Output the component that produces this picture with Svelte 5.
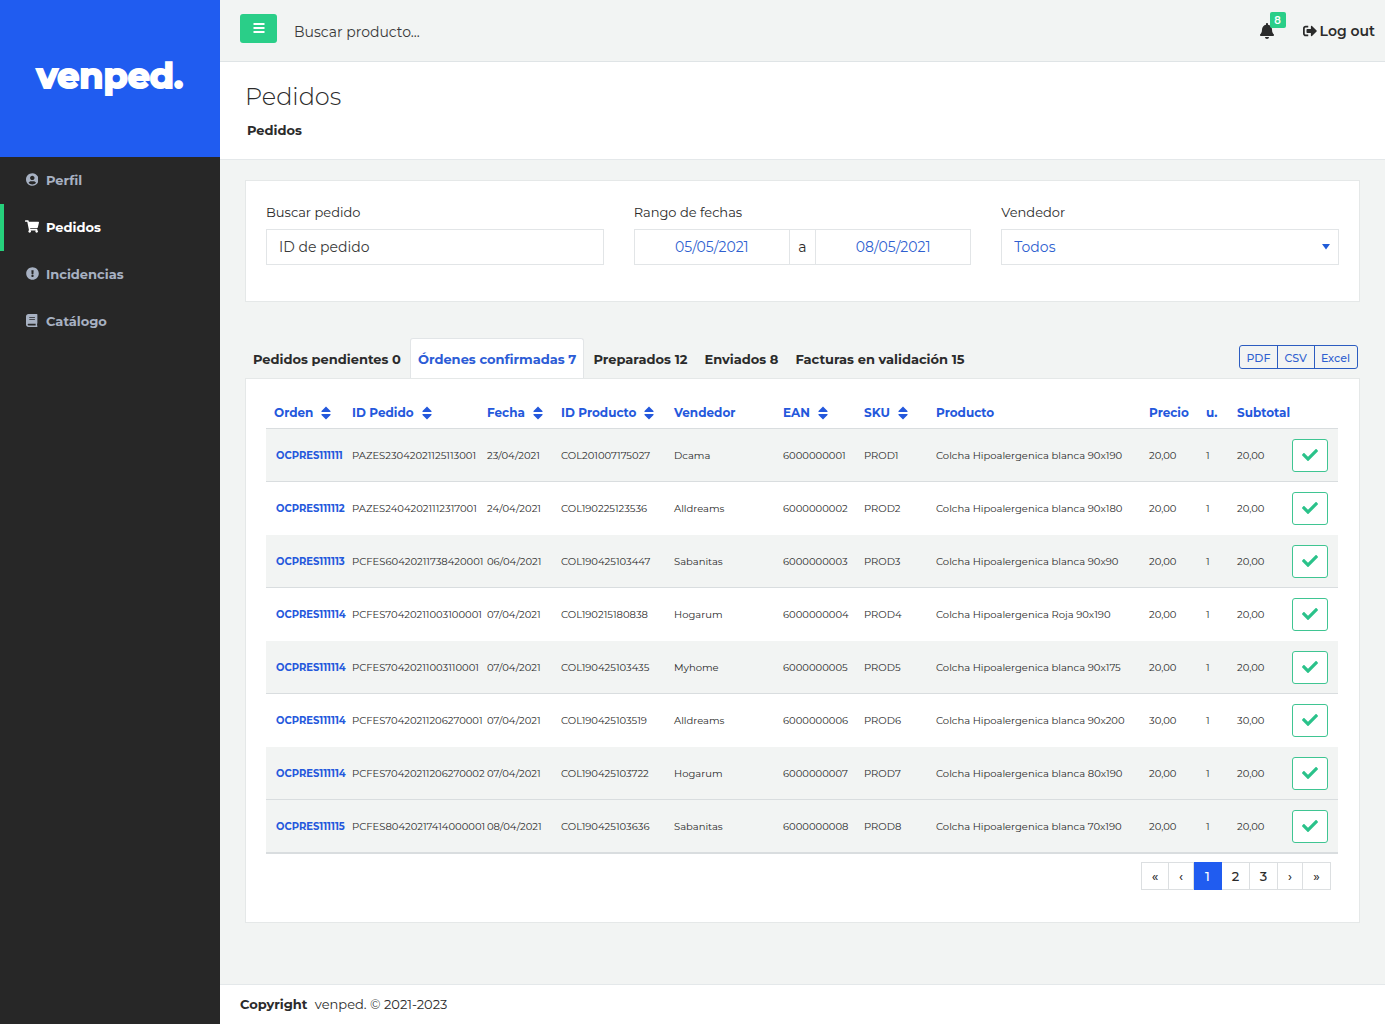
<script>
  const paths = {
    user: ['0 0 496 512', 'M248 8C111 8 0 119 0 256s111 248 248 248 248-111 248-248S385 8 248 8zm0 96c48.6 0 88 39.4 88 88s-39.4 88-88 88-88-39.4-88-88 39.4-88 88-88zm0 344c-58.7 0-111.3-26.6-146.5-68.2 18.8-35.4 55.6-59.8 98.5-59.8 2.4 0 4.8.4 7.1 1.1 13 4.2 26.6 6.9 40.9 6.9 14.3 0 28-2.7 40.9-6.9 2.3-.7 4.7-1.1 7.1-1.1 42.9 0 79.7 24.4 98.5 59.8C359.3 421.4 306.7 448 248 448z'],
    cart: ['0 0 576 512', 'M528.12 301.319l47.273-208C578.806 78.301 567.391 64 551.99 64H159.208l-9.166-44.81C147.758 8.021 137.93 0 126.529 0H24C10.745 0 0 10.745 0 24v16c0 13.255 10.745 24 24 24h69.883l70.248 343.435C147.325 417.1 136 435.222 136 456c0 30.928 25.072 56 56 56s56-25.072 56-56c0-15.674-6.447-29.835-16.824-40h209.647C430.447 426.165 424 440.326 424 456c0 30.928 25.072 56 56 56s56-25.072 56-56c0-22.172-12.888-41.332-31.579-50.405l5.517-24.276c3.413-15.018-8.002-29.319-23.403-29.319H218.117l-6.545-32h293.145c11.206 0 20.92-7.754 23.403-18.681z'],
    alert: ['0 0 512 512', 'M504 256c0 136.997-111.043 248-248 248S8 392.997 8 256C8 119.083 119.043 8 256 8s248 111.083 248 248zm-248 50c-25.405 0-46 20.595-46 46s20.595 46 46 46 46-20.595 46-46-20.595-46-46-46zm-43.673-165.346l7.418 136c.347 6.364 5.609 11.346 11.982 11.346h48.546c6.373 0 11.635-4.982 11.982-11.346l7.418-136c.375-6.874-5.098-12.654-11.982-12.654h-63.383c-6.884 0-12.356 5.78-11.981 12.654z'],
    book: ['0 0 448 512', 'M448 360V24c0-13.3-10.7-24-24-24H96C43 0 0 43 0 96v320c0 53 43 96 96 96h328c13.3 0 24-10.7 24-24v-16c0-7.5-3.5-14.3-8.9-18.7-4.2-15.4-4.2-59.3 0-74.7 5.4-4.3 8.9-11.1 8.9-18.6zM128 134c0-3.3 2.7-6 6-6h212c3.3 0 6 2.7 6 6v20c0 3.3-2.7 6-6 6H134c-3.3 0-6-2.7-6-6v-20zm0 64c0-3.3 2.7-6 6-6h212c3.3 0 6 2.7 6 6v20c0 3.3-2.7 6-6 6H134c-3.3 0-6-2.7-6-6v-20zm253.4 250H96c-17.7 0-32-14.3-32-32 0-17.6 14.4-32 32-32h285.4c-1.9 17.1-1.9 46.9 0 64z'],
    bell: ['0 0 448 512', 'M224 512c35.32 0 63.97-28.65 63.97-64H160.03c0 35.35 28.65 64 63.97 64zm215.39-149.71c-19.32-20.76-55.47-51.99-55.47-154.29 0-77.7-54.48-139.9-127.94-155.16V32c0-17.67-14.32-32-31.98-32s-31.98 14.33-31.98 32v20.84C118.56 68.1 64.08 130.3 64.08 208c0 102.3-36.15 133.53-55.47 154.29-6 6.45-8.66 14.16-8.61 21.71.11 16.4 12.98 32 32.1 32h383.8c19.12 0 32-15.6 32.1-32 .05-7.55-2.61-15.27-8.61-21.71z'],
    logout: ['0 0 512 512', 'M497 273L329 441c-15 15-41 4.5-41-17v-96H152c-13.3 0-24-10.7-24-24v-96c0-13.3 10.7-24 24-24h136V88c0-21.4 25.9-32 41-17l168 168c9.3 9.4 9.3 24.6 0 34zM192 436v-40c0-6.6-5.4-12-12-12H96c-17.7 0-32-14.3-32-32V160c0-17.7 14.3-32 32-32h84c6.6 0 12-5.4 12-12V76c0-6.6-5.4-12-12-12H96c-53 0-96 43-96 96v192c0 53 43 96 96 96h84c6.6 0 12-5.4 12-12z'],
    check: ['0 0 512 512', 'M173.898 439.404l-166.4-166.4c-9.997-9.997-9.997-26.206 0-36.204l36.203-36.204c9.997-9.998 26.207-9.998 36.204 0L192 312.69 432.095 72.596c9.997-9.997 26.207-9.997 36.204 0l36.203 36.204c9.997 9.997 9.997 26.206 0 36.204l-294.4 294.401c-9.998 9.997-26.207 9.997-36.204-.001z'],
    bars: ['0 0 12 12', 'M.5 1h11v2H.5zM.5 5h11v2H.5zM.5 9h11v2H.5z'],
    sort: ['0 0 10 14', 'M5 .5 9.5 5q.5 1-.5 1H1Q0 6 .5 5zM5 13.500.5 9Q0 8 1 8h8q1 0 .5 1z']
  };

  const nav = [
    { label: 'Perfil', icon: 'user' },
    { label: 'Pedidos', icon: 'cart', active: true },
    { label: 'Incidencias', icon: 'alert' },
    { label: 'Catálogo', icon: 'book' }
  ];

  const tabs = ['Pedidos pendientes 0', 'Órdenes confirmadas 7', 'Preparados 12', 'Enviados 8', 'Facturas en validación 15'];
  let activeTab = $state(1);

  const columns = [
    { label: 'Orden', cls: 'c-order', sort: true },
    { label: 'ID Pedido', cls: 'c-id', sort: true },
    { label: 'Fecha', cls: 'c-date', sort: true },
    { label: 'ID Producto', cls: 'c-pid', sort: true },
    { label: 'Vendedor', cls: 'c-seller' },
    { label: 'EAN', cls: 'c-ean', sort: true },
    { label: 'SKU', cls: 'c-sku', sort: true },
    { label: 'Producto', cls: 'c-product' },
    { label: 'Precio', cls: 'c-price' },
    { label: 'u.', cls: 'c-units' },
    { label: 'Subtotal', cls: 'c-subtotal' }
  ];

  const rows = [
    ['OCPRES111111', 'PAZES23042021125113001', '23/04/2021', 'COL201007175027', 'Dcama', '6000000001', 'PROD1', 'Colcha Hipoalergenica blanca 90x190', '20,00', '1', '20,00'],
    ['OCPRES111112', 'PAZES24042021112317001', '24/04/2021', 'COL190225123536', 'Alldreams', '6000000002', 'PROD2', 'Colcha Hipoalergenica blanca 90x180', '20,00', '1', '20,00'],
    ['OCPRES111113', 'PCFES60420211738420001', '06/04/2021', 'COL190425103447', 'Sabanitas', '6000000003', 'PROD3', 'Colcha Hipoalergenica blanca 90x90', '20,00', '1', '20,00'],
    ['OCPRES111114', 'PCFES70420211003100001', '07/04/2021', 'COL190215180838', 'Hogarum', '6000000004', 'PROD4', 'Colcha Hipoalergenica Roja 90x190', '20,00', '1', '20,00'],
    ['OCPRES111114', 'PCFES70420211003110001', '07/04/2021', 'COL190425103435', 'Myhome', '6000000005', 'PROD5', 'Colcha Hipoalergenica blanca 90x175', '20,00', '1', '20,00'],
    ['OCPRES111114', 'PCFES70420211206270001', '07/04/2021', 'COL190425103519', 'Alldreams', '6000000006', 'PROD6', 'Colcha Hipoalergenica blanca 90x200', '30,00', '1', '30,00'],
    ['OCPRES111114', 'PCFES70420211206270002', '07/04/2021', 'COL190425103722', 'Hogarum', '6000000007', 'PROD7', 'Colcha Hipoalergenica blanca 80x190', '20,00', '1', '20,00'],
    ['OCPRES111115', 'PCFES80420217414000001', '08/04/2021', 'COL190425103636', 'Sabanitas', '6000000008', 'PROD8', 'Colcha Hipoalergenica blanca 70x190', '20,00', '1', '20,00']
  ];

  const pages = ['«', '‹', '1', '2', '3', '›', '»'];
</script>

{#snippet icon(name)}
  <svg class="icon {name}" viewBox={paths[name][0]} aria-hidden="true"><path d={paths[name][1]} /></svg>
{/snippet}

<div class="app">
  <aside>
    <div class="brand"><a href="#inicio">venped.</a></div>
    <nav>
      {#each nav as item}
        <a href="#{item.icon}" class:active={item.active}>
          <span class="slot">{@render icon(item.icon)}</span>{item.label}
        </a>
      {/each}
    </nav>
  </aside>

  <div class="page">
    <header class="topbar">
      <button class="toggle" aria-label="Menú">{@render icon('bars')}</button>
      <input class="search" type="text" placeholder="Buscar producto..." aria-label="Buscar producto" />
      <button class="bell-btn" aria-label="Notificaciones">
        {@render icon('bell')}
        <span class="badge">8</span>
      </button>
      <a class="logout-link" href="#salir">{@render icon('logout')}Log out</a>
    </header>

    <section class="heading">
      <h1>Pedidos</h1>
      <strong>Pedidos</strong>
    </section>

    <main>
      <form class="card filters">
        <div class="field">
          <label for="order-id">Buscar pedido</label>
          <input id="order-id" type="text" placeholder="ID de pedido" />
        </div>
        <div class="field">
          <label for="from">Rango de fechas</label>
          <div class="range">
            <input id="from" type="text" value="05/05/2021" />
            <span>a</span>
            <input type="text" value="08/05/2021" aria-label="Fecha final" />
          </div>
        </div>
        <div class="field">
          <label for="seller">Vendedor</label>
          <div class="select">
            <select id="seller"><option>Todos</option></select>
            <svg viewBox="0 0 8 6" aria-hidden="true"><path d="M0 0h8L4 5.500z" /></svg>
          </div>
        </div>
      </form>

      <div class="tabbar">
        <div class="tabs" role="tablist">
          {#each tabs as tab, i}
            <button role="tab" aria-selected={activeTab === i} class:active={activeTab === i} onclick={() => (activeTab = i)}>{tab}</button>
          {/each}
        </div>
        <div class="export">
          <button>PDF</button><button>CSV</button><button>Excel</button>
        </div>
      </div>

      <section class="card orders">
        <table>
          <thead>
            <tr>
              {#each columns as col}
                <th class={col.cls} scope="col">
                  {#if col.sort}
                    <button>{col.label}{@render icon('sort')}</button>
                  {:else}{col.label}{/if}
                </th>
              {/each}
              <th class="c-action" aria-label="Acción"></th>
            </tr>
          </thead>
          <tbody>
            {#each rows as row}
              <tr>
                {#each row as cell, i}
                  <td>{#if i === 0}<a href="#pedido">{cell}</a>{:else}{cell}{/if}</td>
                {/each}
                <td><button class="confirm" aria-label="Confirmar">{@render icon('check')}</button></td>
              </tr>
            {/each}
          </tbody>
        </table>
        <nav class="pagination" aria-label="Páginas">
          {#each pages as p}
            <button class:current={p === '1'} class:single={p === '‹' || p === '›'}>{p}</button>
          {/each}
        </nav>
      </section>
    </main>

    <footer><strong>Copyright</strong> <span>venped. © 2021-2023</span></footer>
  </div>
</div>

<style>
  :global(body) {
    margin: 0;
    background: #f2f4f3;
  }
  .app,
  .app * {
    box-sizing: border-box;
  }
  .app {
    display: flex;
    min-height: 100vh;
    font-family: Montserrat, Inter, sans-serif;
    font-size: 13px;
    line-height: 20px;
    color: #2b2b2b;
  }
  button,
  input,
  select {
    font: inherit;
    color: inherit;
    margin: 0;
    padding: 0;
    border: 0;
    background: none;
  }
  button {
    cursor: pointer;
  }
  a {
    color: inherit;
    text-decoration: none;
  }
  .icon {
    display: block;
    fill: currentColor;
    flex: none;
  }

  aside {
    flex: 0 0 220px;
    background: #272727;
  }
  .brand {
    height: 157px;
    padding-bottom: 6px;
    display: flex;
    align-items: center;
    justify-content: center;
    background: #205cf0;
    color: #fff;
    font-size: 35px;
    line-height: 48px;
    font-weight: 700;
    -webkit-text-stroke: 2px #fff;
  }
  aside nav a {
    display: flex;
    align-items: center;
    height: 47px;
    padding: 0 0 2px 21px;
    border-left: 4px solid transparent;
    color: #a7b1c2;
    font-weight: 700;
  }
  aside nav a.active {
    color: #fff;
    border-left-color: #26d07c;
  }
  .slot {
    width: 14px;
    margin-right: 7px;
    display: flex;
    justify-content: center;
  }
  .slot .icon {
    height: 13px;
    max-width: 14px;
  }

  .page {
    flex: 1;
    min-width: 0;
    display: flex;
    flex-direction: column;
  }
  .topbar {
    height: 62px;
    display: flex;
    align-items: center;
    padding: 0 10px 0 20px;
    border-bottom: 1px solid #dfe4e6;
  }
  .toggle {
    width: 37px;
    height: 29px;
    margin-bottom: 5px;
    display: flex;
    align-items: center;
    justify-content: center;
    border-radius: 3px;
    background: #2ace88;
    color: #fff;
  }
  .bars {
    width: 12px;
  }
  .search {
    flex: 1;
    min-width: 0;
    height: 32px;
    margin: 2px 16px 0;
    padding: 0 1px;
    font-size: 14px;
  }
  input::placeholder {
    color: #3a3a3a;
    opacity: 1;
  }
  .search:focus {
    outline: none;
  }
  .bell-btn {
    position: relative;
    padding: 2px 0;
  }
  .bell {
    width: 14px;
    height: 16px;
  }
  .badge {
    position: absolute;
    left: 10px;
    top: -9px;
    width: 16px;
    height: 16px;
    border-radius: 2px;
    background: #2ace88;
    color: #fff;
    font-size: 10px;
    line-height: 17px;
    font-weight: 600;
    text-align: center;
  }
  .logout-link {
    display: flex;
    align-items: center;
    gap: 3px;
    margin-left: 29px;
    font-size: 14px;
    font-weight: 600;
  }
  .logout {
    width: 14px;
    height: 14px;
  }

  .heading {
    height: 98px;
    padding: 20px 25px 0;
    background: #fff;
    border-bottom: 1px solid #e4e8ea;
  }
  h1 {
    margin: 0 0 8px;
    font-size: 24px;
    line-height: 30px;
    font-weight: 300;
  }
  .heading strong {
    display: block;
    padding-left: 2px;
    font-weight: 700;
  }

  main {
    flex: 1;
    padding: 20px 25px;
  }
  .card {
    background: #fff;
    border: 1px solid #e5e8e8;
  }
  .filters {
    display: grid;
    grid-template-columns: repeat(3, 1fr);
    gap: 30px;
    padding: 21px 20px 36px;
  }
  .field label {
    display: block;
    margin-bottom: 7px;
  }
  .field input,
  .field select {
    width: 100%;
    height: 36px;
    padding: 0 12px;
    border: 1px solid #e2e5e7;
    font-size: 14px;
    background: #fff;
    display: block;
    border-radius: 0;
  }
  .field .range {
    display: flex;
  }
  .field .range input {
    flex: 1;
    min-width: 0;
    text-align: center;
    color: #2f5fd0;
  }
  .range span {
    width: 25px;
    line-height: 34px;
    text-align: center;
    font-size: 14px;
    border: solid #e2e5e7;
    border-width: 1px 0;
  }
  .select {
    display: grid;
    align-items: center;
  }
  .select select {
    grid-area: 1 / 1;
    appearance: none;
    color: #2f5fd0;
  }
  .select svg {
    grid-area: 1 / 1;
    justify-self: end;
    width: 8px;
    height: 6px;
    margin-right: 9px;
    fill: #205cd8;
    pointer-events: none;
  }

  .tabbar {
    display: flex;
    justify-content: space-between;
    align-items: flex-end;
    margin-top: 36px;
  }
  .tabs {
    display: flex;
    gap: 1px;
  }
  .tabs button {
    height: 40px;
    padding: 0 7px;
    border: 1px solid transparent;
    border-bottom: 0;
    border-radius: 3px 3px 0 0;
    font-weight: 700;
    white-space: nowrap;
  }
  .tabs button.active {
    background: #fff;
    border-color: #e2e5e7;
    color: #2c5cd6;
  }
  .export {
    display: flex;
    margin: 0 2px 9px 0;
    border: 1px solid #2c5cc0;
    border-radius: 3px;
    color: #2f5fd0;
    font-size: 11px;
  }
  .export button {
    height: 22px;
    padding: 2px 7px 0 6px;
    font-weight: 500;
  }
  .export button + button {
    border-left: 1px solid #2c5cc0;
  }

  .orders {
    padding: 20px 21px 32px 20px;
  }
  table {
    width: 100%;
    table-layout: fixed;
    border-collapse: separate;
    border-spacing: 0;
    border-bottom: 1px solid #d9dddf;
  }
  th {
    height: 30px;
    padding: 0 0 2px 8px;
    text-align: left;
    font-size: 12px;
    line-height: 16px;
    font-weight: 700;
    color: #2458dc;
    white-space: nowrap;
    border-bottom: 1px solid #d9dddf;
  }
  th button {
    display: flex;
    align-items: center;
    gap: 8px;
  }
  .sort {
    width: 10px;
    height: 14px;
  }
  td {
    height: 53px;
    padding: 2px 0 0 8px;
    font-size: 10px;
    line-height: 16px;
    white-space: nowrap;
    border-bottom: 1px solid #d9dddf;
  }
  td:first-child {
    padding-left: 10px;
    font-weight: 700;
    color: #2458dc;
  }
  td:last-child {
    padding-top: 0;
  }
  tbody tr:nth-child(odd),
  tbody tr:last-child {
    background: #f2f4f3;
  }
  tbody tr:nth-child(even):not(:last-child) td {
    border-bottom-color: #fff;
  }
  .c-order { width: 78px; }
  .c-id { width: 135px; }
  .c-date { width: 74px; }
  .c-pid { width: 113px; }
  .c-seller { width: 109px; }
  .c-ean { width: 81px; }
  .c-sku { width: 72px; }
  .c-price { width: 57px; }
  .c-units { width: 31px; }
  .c-subtotal { width: 55px; }
  .c-action { width: 54px; }
  .confirm {
    width: 36px;
    height: 33px;
    display: flex;
    align-items: center;
    justify-content: center;
    border: 1px solid #3fc592;
    border-radius: 3px;
    background: #fff;
    color: #2ac28a;
  }
  .check {
    width: 16px;
    height: 16px;
  }
  .pagination {
    display: flex;
    justify-content: flex-end;
    margin: 8px 7px 0 0;
  }
  .pagination button {
    width: 28px;
    height: 28px;
    border: 1px solid #dcdfe1;
    background: #fff;
    font-weight: 500;
  }
  .pagination button + button {
    border-left: 0;
  }
  .pagination .single {
    width: 25px;
  }
  .pagination .current {
    background: #205cf0;
    border-color: #205cf0;
    color: #fff;
  }

  footer {
    height: 40px;
    padding: 9px 20px;
    background: #fff;
    border-top: 1px solid #e4e8ea;
  }
  footer span {
    margin-left: 4px;
  }
</style>
